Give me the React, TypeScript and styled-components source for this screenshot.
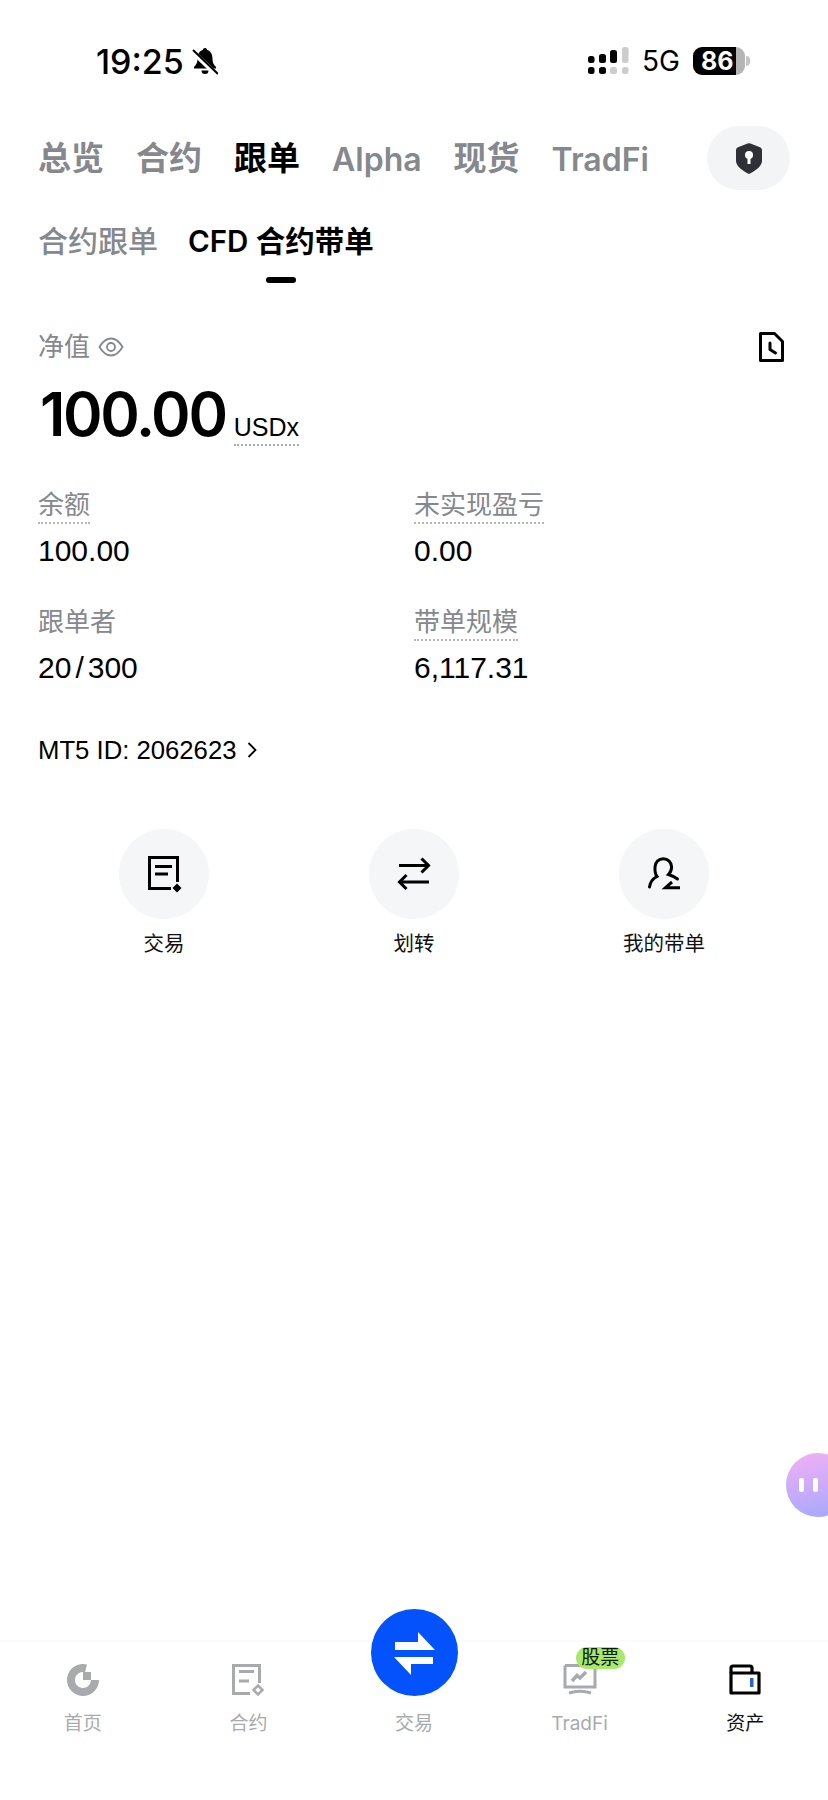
import React from 'react'
import styled, { createGlobalStyle } from 'styled-components'

const NUMBER_FONT = '"Liberation Sans", "Noto Sans CJK SC", sans-serif'

const GlobalStyle = createGlobalStyle`
  html, body {
    margin: 0;
    padding: 0;
    background: #fff;
  }
  body {
    font-family: Inter, "Noto Sans CJK SC", sans-serif;
    color: #000;
  }
`

const Page = styled.div`
  position: relative;
  width: 828px;
  height: 1800px;
  overflow: hidden;
  display: flex;
  flex-direction: column;
  background: #fff;
`

const StatusBar = styled.div`
  height: 122px;
  padding: 0 83px 0 96px;
  box-sizing: border-box;
  display: flex;
  align-items: center;
`

const Clock = styled.span`
  font-size: 34px;
  font-weight: 500;
  margin-right: 8px;
`

const StatusRight = styled.div`
  margin-left: auto;
  display: flex;
  align-items: center;
  gap: 13px;
`

const Network = styled.span`
  font-size: 28px;
  font-weight: 400;
`

const Battery = styled.div`
  position: relative;
  width: 52px;
  height: 28px;
  padding-left: 8px;
  box-sizing: border-box;
  border-radius: 9px;
  background: linear-gradient(90deg, #000 83%, #b5b5b5 83%);
  color: #fff;
  font-size: 25px;
  font-weight: 700;
  line-height: 28px;

  &::after {
    content: '';
    position: absolute;
    right: -5px;
    top: 9px;
    width: 4px;
    height: 10px;
    border-radius: 0 5px 5px 0;
    background: #c4c4c4;
  }
`

const MainTabs = styled.div`
  height: 64px;
  margin-top: 4px;
  padding: 0 38px;
  display: flex;
  align-items: center;
  gap: 32px;
`

const MainTab = styled.span<{ $active?: boolean }>`
  font-size: 33px;
  font-weight: 600;
  line-height: 44px;
  color: ${p => (p.$active ? '#000' : '#85888c')};
`

const LatinTab = styled(MainTab)`
  font-size: 32px;
  padding-top: 3px;
`

const ShieldButton = styled.div`
  margin-left: auto;
  width: 83px;
  height: 64px;
  border-radius: 32px;
  background: #f3f4f6;
  display: flex;
  align-items: center;
  justify-content: center;
`

const SubTabs = styled.div`
  margin-top: 29px;
  padding: 0 38px;
  display: flex;
  gap: 30px;
`

const SubTab = styled.div<{ $active?: boolean }>`
  display: flex;
  flex-direction: column;
  align-items: center;
  font-size: ${p => (p.$active ? '29.5px' : '30px')};
  font-weight: ${p => (p.$active ? 600 : 500)};
  line-height: 44px;
  color: ${p => (p.$active ? '#000' : '#85888c')};
`

const Indicator = styled.div`
  width: 30px;
  height: 6px;
  margin-top: 14px;
  border-radius: 3px;
  background: #000;
`

const EquityHead = styled.div`
  margin-top: 47px;
  padding: 0 44px 0 38px;
  display: flex;
  align-items: center;
  gap: 8px;
  height: 34px;
`

const Label = styled.span`
  font-size: 26px;
  line-height: 34px;
  color: #85888c;
`

const HistoryIcon = styled.svg`
  margin-left: auto;
`

const EquityRow = styled.div`
  margin-top: 14px;
  padding: 0 38px 0 40px;
  display: flex;
  align-items: baseline;
  gap: 8px;
`

const Equity = styled.span`
  font-size: 60px;
  font-weight: 600;
  line-height: 72px;
  letter-spacing: -2.3px;
`

const Unit = styled.span`
  font-family: ${NUMBER_FONT};
  font-size: 25px;
  line-height: 34px;
  border-bottom: 2px dotted #a8aaad;
`

const StatGrid = styled.div`
  margin-top: 38px;
  padding: 0 38px;
  display: grid;
  grid-template-columns: 376px 1fr;
  row-gap: 36px;
`

const Stat = styled.div`
  display: flex;
  flex-direction: column;
  align-items: flex-start;
`

const StatLabel = styled(Label)<{ $dotted?: boolean }>`
  border-bottom: 2px dotted ${p => (p.$dotted ? '#b4b6b8' : 'transparent')};
`

const StatValue = styled.span`
  margin-top: 9px;
  font-family: ${NUMBER_FONT};
  font-size: 30px;
  line-height: 36px;
`

const Slash = styled.span`
  margin: 0 4px;
`

const AccountRow = styled.div`
  margin-top: 47px;
  padding: 0 38px;
  display: flex;
  align-items: center;
  gap: 11px;
  font-family: ${NUMBER_FONT};
  font-size: 25.7px;
  line-height: 34px;
`

const Actions = styled.div`
  margin-top: 62px;
  padding: 0 39px;
  display: grid;
  grid-template-columns: repeat(3, 250px);
`

const Action = styled.div`
  display: flex;
  flex-direction: column;
  align-items: center;
  gap: 11px;
  font-size: 20.5px;
  line-height: 28px;
  color: #111;
`

const ActionCircle = styled.div`
  width: 90px;
  height: 90px;
  border-radius: 50%;
  background: #f4f6f7;
  display: flex;
  align-items: center;
  justify-content: center;
`

const Float = styled.div`
  position: absolute;
  top: 1453px;
  right: -22px;
  width: 64px;
  height: 64px;
  padding-left: 13px;
  box-sizing: border-box;
  border-radius: 50%;
  background: linear-gradient(170deg, #f2b0f6 0%, #a5a8fc 100%);
  display: flex;
  align-items: center;
  gap: 9px;
`

const FloatEye = styled.span`
  width: 5px;
  height: 14px;
  border-radius: 2px;
  background: #fff;
`

const BottomNav = styled.div`
  margin-top: auto;
  height: 160px;
  padding-top: 22px;
  box-sizing: border-box;
  border-top: 2px solid #fbfbfb;
  display: grid;
  grid-template-columns: repeat(5, 1fr);
`

const NavItem = styled.div<{ $active?: boolean }>`
  position: relative;
  display: flex;
  flex-direction: column;
  align-items: center;
  font-size: 19px;
  line-height: 26px;
  color: ${p => (p.$active ? '#111' : '#a8aaad')};
`

const NavIcon = styled.div`
  height: 34px;
  margin-bottom: 13px;
  display: flex;
  align-items: flex-start;
  justify-content: center;
`

const SwapButton = styled.div`
  position: absolute;
  top: -55px;
  left: 39.5px;
  width: 87px;
  height: 87px;
  border-radius: 50%;
  background: #0452fb;
  display: flex;
  align-items: center;
  justify-content: center;
`

const Badge = styled.span`
  position: absolute;
  top: -17px;
  left: 79px;
  width: 49px;
  height: 22px;
  border-radius: 11px;
  background: #a9e86c;
  color: #0a1a00;
  font-size: 19px;
  line-height: 22px;
  text-align: center;
`

const BellOff = () => (
  <svg width="26" height="28" viewBox="0 0 26 28">
    <path d="M13 1c1.2 0 2 .8 2.2 1.9C19 4.2 20.5 7.4 20.5 12c0 3.5 1.2 5.7 3.5 8v1.5H2V20c2.3-2.3 3.5-4.5 3.5-8 0-4.6 1.5-7.800 5.3-9.100C11 1.800 11.800 1 13 1z" fill="#000" />
    <path d="M9.500 23.500h7a3.500 3.500 0 0 1-7 0z" fill="#000" />
    <path d="M1 5l23 22" stroke="#fff" strokeWidth="5" />
    <path d="M1 3l25 24" stroke="#000" strokeWidth="2" />
  </svg>
)

const Signal = () => (
  <svg width="41" height="28" viewBox="0 0 41 28">
    <rect x="0" y="9" width="6.500" height="7" rx="2.500" fill="#000" />
    <rect x="11" y="7" width="7" height="9" rx="2.500" fill="#000" />
    <rect x="22" y="3" width="7" height="13" rx="2.500" fill="#000" />
    <rect x="34" y="0" width="6.500" height="16" rx="2.500" fill="#ccc" />
    <rect x="0" y="20" width="6.500" height="7" rx="2.500" fill="#000" />
    <rect x="11" y="20" width="7" height="7" rx="2.500" fill="#000" />
    <rect x="22" y="20" width="7" height="7" rx="2.500" fill="#ccc" />
    <rect x="34" y="20" width="6.500" height="7" rx="2.500" fill="#ccc" />
  </svg>
)

const Shield = () => (
  <svg width="26" height="31" viewBox="0 0 26 31">
    <path d="M11.500.6a4 4 0 0 1 3 0l9.500 3.700A3 3 0 0 1 26 7v11c0 5.500-8 10.800-13 13C8 28.800 0 23.500 0 18V7a3 3 0 0 1 2-2.700z" fill="#2e3035" />
    <circle cx="13" cy="12" r="4" fill="#fff" />
    <rect x="11.500" y="13" width="3" height="8" fill="#fff" />
  </svg>
)

const Eye = () => (
  <svg width="26" height="20" viewBox="0 0 26 20" fill="none" stroke="#85888c" strokeWidth="1.800">
    <path d="M1.500 10C5 4 9 1.500 13 1.500S21 4 24.500 10C21 16 17 18.500 13 18.500S5 16 1.500 10z" />
    <circle cx="13" cy="10" r="4" />
  </svg>
)

const History = () => (
  <HistoryIcon width="25" height="30" viewBox="0 0 25 30" fill="none" stroke="#000" strokeWidth="3" strokeLinejoin="round">
    <path d="M1.500 1.500H15.500L23.500 9.500V28.500H1.500Z" />
    <path d="M11 11V17.500L16.500 21" strokeLinecap="round" />
  </HistoryIcon>
)

const Chevron = () => (
  <svg width="10" height="16" viewBox="0 0 10 16" fill="none" stroke="#000" strokeWidth="1.800">
    <path d="M1.500 1L8.500 8L1.500 15" />
  </svg>
)

const TradeIcon = () => (
  <svg width="40" height="40" viewBox="0 0 40 40" fill="none" stroke="#000" strokeWidth="3">
    <path d="M33.500 28V3.500H5.500V34.500H27" />
    <path d="M11 12.500H28M11 20H24" />
    <path d="M33 29.500L37.500 34L33 38.500L28.500 34Z" fill="#000" stroke="none" />
  </svg>
)

const TransferIcon = () => (
  <svg width="40" height="40" viewBox="0 0 40 40" fill="none" stroke="#000" strokeWidth="3">
    <path d="M5 11.500H34M27.500 4.500L34.500 11.500L27.500 18.500" />
    <path d="M35 28H5.500M12.500 21L5.500 28L12.500 35" />
  </svg>
)

const LeaderIcon = () => (
  <svg width="40" height="40" viewBox="0 0 40 40" fill="none" stroke="#000" strokeWidth="3">
    <path d="M5.500 33C6 28 8.500 25 13 22.500C11 20 10.800 17 11 13A8.300 8.300 0 0 1 27.600 13C27.600 16 26.500 18.500 24.500 20.500C27.500 21.500 31 23 33.500 25" strokeLinecap="round" />
    <path d="M36 33.700H21.500L28 28" />
  </svg>
)

const HomeIcon = () => (
  <svg width="32" height="32" viewBox="0 0 32 32" fill="none">
    <path d="M19 4.400A12 12 0 1 0 28 16" stroke="#a8aaad" strokeWidth="8" />
    <rect x="16" y="8" width="8" height="8" fill="#a8aaad" />
  </svg>
)

const ContractIcon = () => (
  <svg width="32" height="33" viewBox="0 0 32 33" fill="none" stroke="#a8aaad" strokeWidth="3">
    <path d="M27.500 19V1.500H1.500V29.500H18" />
    <path d="M7 7.500H22M7 17H17" />
    <path d="M26 21.500L30.500 26L26 30.500L21.500 26Z" strokeWidth="2.500" />
  </svg>
)

const SwapIcon = () => (
  <svg width="87" height="87" viewBox="0 0 87 87" fill="#fff">
    <path d="M24 33H47V23L64 41H24Z" />
    <path d="M23 48H62V55H40V66Z" />
  </svg>
)

const TradFiIcon = () => (
  <svg width="34" height="34" viewBox="0 0 34 34" fill="none" stroke="#a8aaad" strokeWidth="3">
    <path d="M2 1.500V23H32V1.500H2" />
    <path d="M6 29Q17 25.500 28 29" />
    <path d="M9 17L14 11.500L17 14L23 8" strokeWidth="3.500" />
  </svg>
)

const AssetsIcon = () => (
  <svg width="32" height="31" viewBox="0 0 32 31" fill="none" stroke="#000" strokeWidth="3.200">
    <path d="M2 9H30V29H2Z" strokeLinejoin="round" />
    <path d="M2 9V4Q2 2 4 2H21Q23 2 23 4V9" />
    <rect x="21" y="14" width="3.500" height="9" fill="#2a5fe0" stroke="none" />
  </svg>
)

const App: React.FC = () => {
  return (
    <Page>
      <GlobalStyle />
      <StatusBar>
        <Clock>19:25</Clock>
        <BellOff />
        <StatusRight>
          <Signal />
          <Network>5G</Network>
          <Battery>86</Battery>
        </StatusRight>
      </StatusBar>

      <MainTabs>
        <MainTab>总览</MainTab>
        <MainTab>合约</MainTab>
        <MainTab $active>跟单</MainTab>
        <LatinTab>Alpha</LatinTab>
        <MainTab>现货</MainTab>
        <LatinTab>TradFi</LatinTab>
        <ShieldButton><Shield /></ShieldButton>
      </MainTabs>

      <SubTabs>
        <SubTab>合约跟单</SubTab>
        <SubTab $active>
          CFD 合约带单
          <Indicator />
        </SubTab>
      </SubTabs>

      <EquityHead>
        <Label>净值</Label>
        <Eye />
        <History />
      </EquityHead>
      <EquityRow>
        <Equity>100.00</Equity>
        <Unit>USDx</Unit>
      </EquityRow>

      <StatGrid>
        <Stat>
          <StatLabel $dotted>余额</StatLabel>
          <StatValue>100.00</StatValue>
        </Stat>
        <Stat>
          <StatLabel $dotted>未实现盈亏</StatLabel>
          <StatValue>0.00</StatValue>
        </Stat>
        <Stat>
          <StatLabel>跟单者</StatLabel>
          <StatValue>20<Slash>/</Slash>300</StatValue>
        </Stat>
        <Stat>
          <StatLabel $dotted>带单规模</StatLabel>
          <StatValue>6,117.31</StatValue>
        </Stat>
      </StatGrid>

      <AccountRow>
        MT5 ID: 2062623
        <Chevron />
      </AccountRow>

      <Actions>
        <Action>
          <ActionCircle><TradeIcon /></ActionCircle>
          交易
        </Action>
        <Action>
          <ActionCircle><TransferIcon /></ActionCircle>
          划转
        </Action>
        <Action>
          <ActionCircle><LeaderIcon /></ActionCircle>
          我的带单
        </Action>
      </Actions>

      <Float>
        <FloatEye />
        <FloatEye />
      </Float>

      <BottomNav>
        <NavItem>
          <NavIcon><HomeIcon /></NavIcon>
          首页
        </NavItem>
        <NavItem>
          <NavIcon><ContractIcon /></NavIcon>
          合约
        </NavItem>
        <NavItem>
          <NavIcon />
          <SwapButton><SwapIcon /></SwapButton>
          交易
        </NavItem>
        <NavItem>
          <NavIcon><TradFiIcon /></NavIcon>
          <Badge>股票</Badge>
          TradFi
        </NavItem>
        <NavItem $active>
          <NavIcon><AssetsIcon /></NavIcon>
          资产
        </NavItem>
      </BottomNav>
    </Page>
  )
}

export default App
